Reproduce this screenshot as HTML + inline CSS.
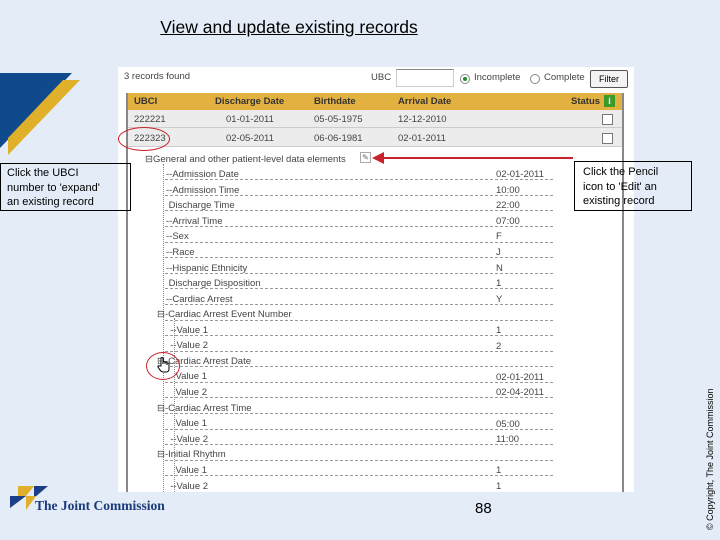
<!DOCTYPE html>
<html><head><meta charset="utf-8"><style>
*{margin:0;padding:0;box-sizing:border-box}
body{width:720px;height:540px;background:#e4ecf7;position:relative;overflow:hidden;font-family:"Liberation Sans",sans-serif}
.a{position:absolute;white-space:nowrap}
.t{font-size:9.5px;color:#444}
.r{position:absolute;left:165px;width:388px;height:0;border-bottom:1px dashed #999}
</style></head><body>
<div class="a" style="left:0;top:17px;width:578px;text-align:center;font-size:17.5px;text-decoration:underline;color:#000">View and update existing records</div>
<svg class="a" style="left:0;top:73px" width="82" height="82"><polygon points="0,0 72,0 0,75" fill="#0f4a8c"/><polygon points="80,7 8,82 8,65 63,7" fill="#e0b02a"/></svg>
<div class="a" style="left:118px;top:67px;width:516px;height:425px;background:#fff"></div>
<div class="a" style="left:126px;top:93px;width:2px;height:399px;background:#888"></div>
<div class="a" style="left:622px;top:93px;width:2px;height:399px;background:#888"></div>
<div class="a t" style="left:124px;top:71px">3 records found</div>
<div class="a t" style="left:371px;top:72px">UBC</div>
<div class="a" style="left:396px;top:69px;width:58px;height:18px;border:1px solid #ccc;border-top-color:#888"></div>
<div class="a" style="left:460px;top:74px;width:10px;height:10px;border-radius:50%;border:1px solid #888;background:#fff"><div style="margin:2px;width:4px;height:4px;border-radius:50%;background:#2a8a2a"></div></div>
<div class="a t" style="left:474px;top:72px">Incomplete</div>
<div class="a" style="left:530px;top:74px;width:10px;height:10px;border-radius:50%;border:1px solid #888;background:#fff"></div>
<div class="a t" style="left:544px;top:72px">Complete</div>
<div class="a" style="left:590px;top:70px;width:38px;height:18px;border:1px solid #555;border-radius:2px;background:#f3f3f3;font-size:9px;text-align:center;line-height:16px">Filter</div>
<div class="a" style="left:128px;top:93px;width:494px;height:17px;background:#e2b13f"></div>
<div class="a t" style="top:96px;left:134px;font-weight:bold;color:#333">UBCI</div>
<div class="a t" style="top:96px;left:215px;font-weight:bold;color:#333">Discharge Date</div>
<div class="a t" style="top:96px;left:314px;font-weight:bold;color:#333">Birthdate</div>
<div class="a t" style="top:96px;left:398px;font-weight:bold;color:#333">Arrival Date</div>
<div class="a t" style="top:96px;left:571px;font-weight:bold;color:#333">Status</div>
<div class="a" style="left:604px;top:95px;width:11px;height:12px;background:#3a9a2a;color:#fff;font-size:9px;font-weight:bold;text-align:center;line-height:12px">i</div>
<div class="a" style="left:128px;top:110px;width:494px;height:18px;background:#ececec;border-bottom:1px solid #ccc"></div>
<div class="a" style="left:128px;top:128px;width:494px;height:19px;background:#ececec;border-bottom:1px solid #ccc"></div>
<div class="a t" style="top:114px;left:134px">222221</div><div class="a t" style="top:114px;left:226px">01-01-2011</div><div class="a t" style="top:114px;left:314px">05-05-1975</div><div class="a t" style="top:114px;left:398px">12-12-2010</div>
<div class="a t" style="top:133px;left:134px">222323</div><div class="a t" style="top:133px;left:226px">02-05-2011</div><div class="a t" style="top:133px;left:314px">06-06-1981</div><div class="a t" style="top:133px;left:398px">02-01-2011</div>
<div class="a" style="left:602px;top:114px;width:11px;height:11px;border:1px solid #777;background:#fff"></div>
<div class="a" style="left:602px;top:133px;width:11px;height:11px;border:1px solid #777;background:#fff"></div>
<div class="a" style="left:118px;top:127px;width:52px;height:24px;border:1.5px solid #c8222a;border-radius:50%"></div>
<div class="a t" style="left:145px;top:154px">⊟General and other patient-level data elements</div>
<div class="a" style="left:360px;top:152px;width:11px;height:11px;border:1px solid #aaa;font-size:8px;line-height:9px;text-align:center;color:#666">✎</div>
<div class="a" style="left:378px;top:157px;width:195px;height:2px;background:#c8222a"></div>
<svg class="a" style="left:372px;top:152px" width="12" height="12"><polygon points="0,6 12,0 12,12" fill="#c8222a"/></svg>
<div class="a" style="left:163px;top:164px;width:0;height:328px;border-left:1px dotted #888"></div>
<div class="a" style="left:174px;top:318px;width:0;height:174px;border-left:1px dotted #888"></div>
<div class="a t" style="left:166px;top:167px;line-height:15.6px">
--Admission Date<br>--Admission Time<br>&nbsp;Discharge Time<br>--Arrival Time<br>--Sex<br>--Race<br>--Hispanic Ethnicity<br>&nbsp;Discharge Disposition<br>--Cardiac Arrest</div>
<div class="a t" style="left:157px;top:307px;line-height:15.6px">
⊟-Cardiac Arrest Event Number<br>&nbsp;&nbsp;&nbsp;&nbsp;&nbsp;--Value 1<br>&nbsp;&nbsp;&nbsp;&nbsp;&nbsp;--Value 2<br>⊟-Cardiac Arrest Date<br>&nbsp;&nbsp;&nbsp;&nbsp;&nbsp;&nbsp;&nbsp;Value 1<br>&nbsp;&nbsp;&nbsp;&nbsp;&nbsp;&nbsp;&nbsp;Value 2<br>⊟-Cardiac Arrest Time<br>&nbsp;&nbsp;&nbsp;&nbsp;&nbsp;&nbsp;&nbsp;Value 1<br>&nbsp;&nbsp;&nbsp;&nbsp;&nbsp;--Value 2<br>⊟-Initial Rhythm<br>&nbsp;&nbsp;&nbsp;&nbsp;&nbsp;&nbsp;&nbsp;Value 1<br>&nbsp;&nbsp;&nbsp;&nbsp;&nbsp;--Value 2</div>
<div class="a t" style="left:496px;top:167px;line-height:15.6px">02-01-2011<br>10:00<br>22:00<br>07:00<br>F<br>J<br>N<br>1<br>Y<br>&nbsp;<br>1<br>2<br>&nbsp;<br>02-01-2011<br>02-04-2011<br>&nbsp;<br>05:00<br>11:00<br>&nbsp;<br>1<br>1</div>
<div class="r" style="top:179px"></div><div class="r" style="top:195px"></div><div class="r" style="top:210px"></div><div class="r" style="top:226px"></div><div class="r" style="top:242px"></div><div class="r" style="top:257px"></div><div class="r" style="top:273px"></div><div class="r" style="top:288px"></div><div class="r" style="top:304px"></div><div class="r" style="top:320px"></div><div class="r" style="top:335px"></div><div class="r" style="top:351px"></div><div class="r" style="top:366px"></div><div class="r" style="top:382px"></div><div class="r" style="top:397px"></div><div class="r" style="top:413px"></div><div class="r" style="top:429px"></div><div class="r" style="top:444px"></div><div class="r" style="top:460px"></div><div class="r" style="top:475px"></div>
<div class="a" style="left:146px;top:352px;width:34px;height:28px;border:1.5px solid #c8222a;border-radius:50%"></div>
<svg class="a" style="left:157px;top:356px" width="14" height="18" viewBox="0 0 14 18"><path d="M4 10V2.5a1 1 0 0 1 2 0V8V6.5a1 1 0 0 1 2 0V8V7a1 1 0 0 1 2 0V9V8a1 1 0 0 1 2 0V13c0 2-1 3-3 3H6c-1.5 0-2-1-3-2L1 11c-.6-.8.3-1.6 1-1z" fill="#fff" stroke="#000" stroke-width="1"/></svg>
<div class="a" style="left:0;top:163px;width:131px;height:48px;border:1px solid #000;font-size:11px;line-height:14.5px;padding:2px 6px;color:#000">Click the UBCI<br>number to 'expand'<br>an existing record</div>
<div class="a" style="left:574px;top:161px;width:118px;height:50px;border:1px solid #000;font-size:11px;line-height:14.5px;padding:3px 8px;color:#000">Click the Pencil<br>icon to 'Edit' an<br>existing record</div>
<div class="a" style="left:705px;top:530px;transform:rotate(-90deg);transform-origin:0 0;font-size:9px;color:#000">© Copyright, The Joint Commission</div>
<div class="a" style="left:475px;top:500px;font-size:15px;color:#000">88</div>
<svg class="a" style="left:10px;top:486px" width="40" height="30"><polygon points="8,0 24,0 16,10 8,10" fill="#e0b02a"/><polygon points="24,0 38,0 24,12" fill="#1a3f88"/><polygon points="0,10 16,10 0,22" fill="#1a3f88"/><polygon points="16,10 26,10 16,24" fill="#e0b02a"/></svg>
<div class="a" style="left:35px;top:498px;font-family:'Liberation Serif',serif;font-weight:bold;font-size:13.5px;color:#1a3a7a">The Joint Commission</div>
</body></html>
